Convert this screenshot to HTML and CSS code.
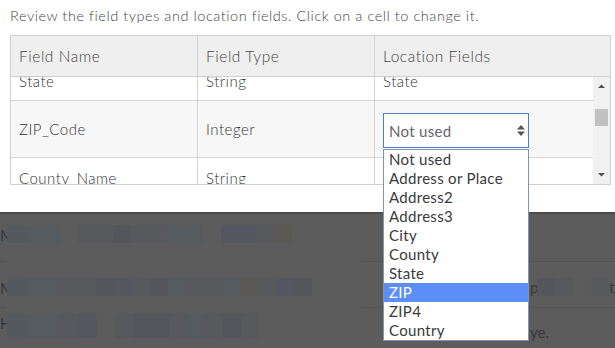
FILE: index.html
```html
<!DOCTYPE html>
<html><head><meta charset="utf-8"><title>Location fields</title>
<link rel="stylesheet" href="styles.css">
</head><body>
<div class="dialog">
   <p class="intro">Review the field types and location fields. Click on a cell to change it.</p>
   <div class="grid">
      <div class="head">
         <div class="c c1">Field Name</div>
         <div class="c c2">Field Type</div>
         <div class="c c3">Location Fields</div>
      </div>
      <div class="body">
         <div class="rows">
            <div class="row first">
               <div class="c c1">State</div>
               <div class="c c2">String</div>
               <div class="c c3">State</div>
            </div>
            <div class="row alt tall">
               <div class="c c1">ZIP_Code</div>
               <div class="c c2">Integer</div>
               <div class="c c3">
                  <div class="select">
                     <span>Not used</span>
                     <svg width="10" height="13" viewBox="0 0 10 13"><path d="M1 5.5 5 1 9 5.5Z M1 7.5 5 12 9 7.5Z" fill="#555"/></svg>
                  </div>
               </div>
            </div>
            <div class="row">
               <div class="c c1">County_Name</div>
               <div class="c c2">String</div>
               <div class="c c3"></div>
            </div>
         </div>
         <div class="sbar">
            <svg width="17" height="10" viewBox="0 0 17 10"><path d="M5 7 8.5 3.5 12 7Z" fill="#505050"/></svg>
            <div class="thumb"></div>
            <svg class="down" width="17" height="10" viewBox="0 0 17 10"><path d="M5 3 8.5 6.5 12 3Z" fill="#505050"/></svg>
         </div>
      </div>
   </div>
   <ul class="options">
      <li>Not used</li>
      <li>Address or Place</li>
      <li>Address2</li>
      <li>Address3</li>
      <li>City</li>
      <li>County</li>
      <li>State</li>
      <li class="on">ZIP</li>
      <li>ZIP4</li>
      <li>Country</li>
   </ul>
</div>
<div class="backdrop">
   <div class="item i1">
      <span class="lt">M</span>
      <span class="px a"></span><span class="px b w2"></span><span class="px"></span><span class="px c w2"></span><span class="px d"></span><span class="px c"></span><span class="px c"></span><span class="px b"></span><span class="px b"></span><span class="px"></span><span class="px e w2"></span><span class="px c"></span><span class="px f"></span>
   </div>
   <div class="rule"><span class="seg s1"></span><span class="seg s2"></span></div>
   <div class="item i2">
      <span class="lt">M</span>
      <span class="px a"></span><span class="px b w2"></span><span class="px c"></span><span class="px c"></span><span class="px d"></span><span class="px e"></span><span class="px c"></span><span class="px d"></span><span class="px b"></span><span class="px c"></span><span class="px c"></span><span class="px b"></span><span class="px f"></span><span class="px c"></span><span class="px e"></span><span class="px d"></span>
      <span class="right"><span class="tx">pi</span><span class="px d"></span><span class="px c"></span><span class="px"></span><span class="px c"></span><span class="tx">ti</span></span>
   </div>
   <div class="rule"><span class="seg s1"></span><span class="seg s2"></span></div>
   <div class="item i3">
      <span class="lt">H</span>
      <span class="px a tall"></span><span class="px b tall"></span><span class="px b tall"></span><span class="px c tall"></span><span class="px e tall"></span><span class="px tall"></span><span class="px c tall"></span><span class="px d tall"></span><span class="px d tall"></span><span class="px c tall"></span><span class="px b tall"></span><span class="px c tall"></span><span class="px d tall"></span><span class="px c tall"></span>
      <span class="right"><span class="tx">ye.</span></span>
   </div>
</div>
</body></html>
```
FILE: styles.css
```css
body
{
	margin      : 0;
	font-family : Lato, "Open Sans", sans-serif;
	color       : #4a4a4a;
	background  : #fff;
	overflow    : hidden;
}
.dialog { position : relative; height : 212px; }
.intro
{
	margin         : 0;
	padding        : 6px 10px 0;
	font-size      : 14.5px;
	font-weight    : 300;
	letter-spacing : .55px;
	line-height    : 20px;
	color          : #444;
}
.grid
{
	margin     : 9px 0 0 10px;
	width      : 601px;
	box-sizing : border-box;
	border     : 1px solid #cfcfcf;
}
.head
{
	display        : flex;
	height         : 40px;
	background     : #efefef;
	border-bottom  : 1px solid #cfcfcf;
	font-size      : 15.5px;
	font-weight    : 300;
	letter-spacing : .55px;
	color          : #444;
}
.c
{
	display     : flex;
	align-items : center;
	padding     : 0 8px;
	box-sizing  : border-box;
	white-space : nowrap;
	overflow    : hidden;
}
.c1 { width : 187px; border-right : 1px solid #d4d4d4; }
.c2 { width : 177px; border-right : 1px solid #d4d4d4; }
.c3 { flex : 1; }
.body { display : flex; height : 107px; }
.rows
{
	flex           : 1;
	overflow       : hidden;
	font-size      : 15px;
	font-weight    : 300;
	letter-spacing : .5px;
	color          : #333;
}
.row
{
	display       : flex;
	height        : 40px;
	box-sizing    : border-box;
	border-bottom : 1px solid #d4d4d4;
	background    : #fff;
}
.row.first { margin-top : -16px; }
.row.alt   { background : #f7f7f7; }
.row.tall  { height : 57px; }
.row.tall .c3 { align-items : flex-start; padding-top : 12px; }
.select
{
	display         : flex;
	align-items     : center;
	justify-content : space-between;
	width           : 146px;
	height          : 35px;
	box-sizing      : border-box;
	padding         : 0 2px 0 5px;
	border          : 1px solid #4c7cc6;
	background      : #fff;
	color           : #666;
	font-weight     : 400;
	letter-spacing  : .3px;
}
.sbar
{
	width          : 17px;
	background     : #f1f1f1;
	display        : flex;
	flex-direction : column;
	align-items    : center;
	padding-top    : 4px;
	box-sizing     : border-box;
}
.thumb
{
	width      : 13px;
	height     : 17px;
	margin-top : 18px;
	background : #c1c1c1;
}
.sbar .down { margin-top : auto; margin-bottom : 4px; }
.options
{
	position       : absolute;
	left           : 383px;
	top            : 149px;
	width          : 146px;
	margin         : 0;
	padding        : 0;
	list-style     : none;
	box-sizing     : border-box;
	border         : 1px solid #8391b3;
	background     : #fff;
	z-index        : 2;
	font-size      : 15px;
	letter-spacing : .3px;
	color          : #3a3a3a;
}
.options li { height : 19px; line-height : 19px; padding-left : 5px; }
.options li.on { background : #5b8ef7; color : #fff; }

.backdrop
{
	height     : 136px;
	background : #5c5c5c;
	border-top : 2px solid #4c4c4c;
	box-sizing : border-box;
	font-size  : 15px;
	color      : #333a46;
}
.item { display : flex; white-space : nowrap; box-sizing : border-box; align-items : flex-start; }
.i1 { padding-top : 11px; height : 47px; }
.i2 { padding-top : 16px; height : 45px; }
.i3 { padding-top : 5px; }
.lt { width : 7px; overflow : hidden; line-height : 20px; }
.px { display : inline-block; width : 18px; height : 18px; flex : none; }
.px.w2 { width : 35px; }
.px.tall { height : 25px; }
.px.a { background : #55595d; }
.px.b { background : #555b5e; }
.px.c { background : #58595d; }
.px.d { background : #54565c; }
.px.e { background : #54575f; }
.px.f { background : #5b5956; }
.right { display : flex; margin-left : auto; width : 85px; overflow : hidden; }
.tx { line-height : 18px; width : 7px; color : #383838; }
.i3 .tx { width : auto; padding-top : 10px; }
.rule { display : flex; height : 1px; }
.seg { height : 1px; background : #535353; }
.s1 { width : 6px; }
.s2 { margin-left : auto; width : 254px; }
```
